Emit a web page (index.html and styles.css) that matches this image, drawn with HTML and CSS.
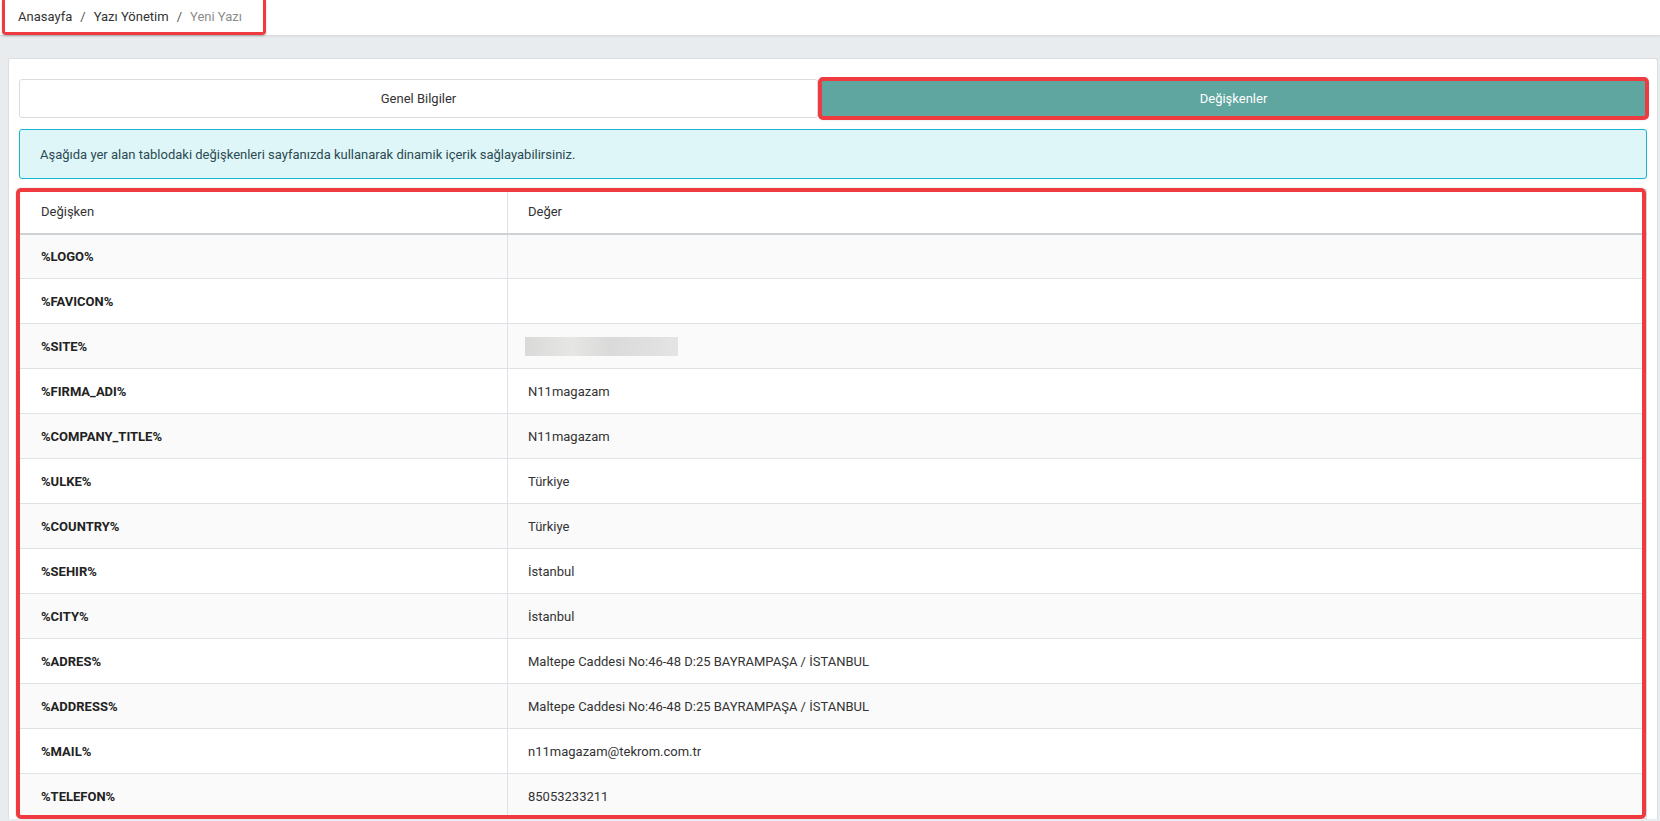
FILE: index.html
```html
<!DOCTYPE html>
<html lang="tr">
<head>
<meta charset="utf-8">
<title>Yeni Yazı</title>
<link rel="stylesheet" href="styles.css">
</head>
<body>
<header class="topbar">
  <nav class="breadcrumb">
    <a class="crumb" href="#">Anasayfa</a>
    <span class="sep">/</span>
    <a class="crumb" href="#">Yazı Yönetim</a>
    <span class="sep">/</span>
    <span class="crumb current">Yeni Yazı</span>
  </nav>
</header>
<main class="page">
  <section class="card">
    <div class="tabs">
      <button class="tab">Genel Bilgiler</button>
      <button class="tab active">Değişkenler</button>
    </div>
    <div class="alert">Aşağıda yer alan tablodaki değişkenleri sayfanızda kullanarak dinamik içerik sağlayabilirsiniz.</div>
    <div class="table-wrap">
      <table class="vars">
        <thead>
          <tr><th class="c1">Değişken</th><th>Değer</th></tr>
        </thead>
        <tbody>
          <tr><td class="c1">%LOGO%</td><td></td></tr>
          <tr><td class="c1">%FAVICON%</td><td></td></tr>
          <tr><td class="c1">%SITE%</td><td><span class="blur"></span></td></tr>
          <tr><td class="c1">%FIRMA_ADI%</td><td>N11magazam</td></tr>
          <tr><td class="c1">%COMPANY_TITLE%</td><td>N11magazam</td></tr>
          <tr><td class="c1">%ULKE%</td><td>Türkiye</td></tr>
          <tr><td class="c1">%COUNTRY%</td><td>Türkiye</td></tr>
          <tr><td class="c1">%SEHIR%</td><td>İstanbul</td></tr>
          <tr><td class="c1">%CITY%</td><td>İstanbul</td></tr>
          <tr><td class="c1">%ADRES%</td><td>Maltepe Caddesi No:46-48 D:25 BAYRAMPAŞA / İSTANBUL</td></tr>
          <tr><td class="c1">%ADDRESS%</td><td>Maltepe Caddesi No:46-48 D:25 BAYRAMPAŞA / İSTANBUL</td></tr>
          <tr><td class="c1">%MAIL%</td><td>n11magazam@tekrom.com.tr</td></tr>
          <tr><td class="c1">%TELEFON%</td><td>85053233211</td></tr>
        </tbody>
      </table>
    </div>
  </section>
</main>
</body>
</html>
```

FILE: styles.css
```css
* { box-sizing: border-box; }

html, body {
  margin: 0;
  padding: 0;
}

body {
  background: #e9ecef;
  font-family: Roboto, "Liberation Sans", Arial, sans-serif;
  font-size: 13px;
  color: #333;
}

.topbar {
  background: #fff;
  height: 36px;
  border-bottom: 1px solid #d9dcdf;
  box-shadow: 0 1px 2px rgba(0,0,0,0.05);
}

.breadcrumb {
  display: flex;
  align-items: center;
  width: 264px;
  height: 35px;
  margin-left: 2px;
  padding-left: 13px;
  border: 3px solid #ef3b3f;
  border-top: none;
  border-radius: 0 0 4px 4px;
  box-shadow: 0 1px 2px rgba(0,0,0,0.25);
}

.crumb {
  color: #333;
  text-decoration: none;
}

.crumb.current { color: #8c8c8c; }

.sep {
  color: #555;
  padding: 0 8px;
}

.page {
  padding: 22px 2px 0 8px;
}

.card {
  background: #fff;
  border: 1px solid #dcdfe2;
  border-bottom: none;
  border-radius: 3px 3px 0 0;
  padding: 20px 10px 0 10px;
}

.tabs {
  display: grid;
  grid-template-columns: 799px 1fr;
  column-gap: 2px;
  margin-bottom: 11px;
}

.tab {
  height: 39px;
  font-family: inherit;
  font-size: 13px;
  color: #333;
  background: #fff;
  border: 1px solid #dcdcdc;
  border-radius: 3px;
  cursor: pointer;
}

.tab.active {
  background: #5fa5a0;
  border-color: #5fa5a0;
  color: #fff;
  outline: 4px solid #ef3b3f;
  outline-offset: -2px;
  box-shadow: 0 1px 3px rgba(0,0,0,0.35);
}

.alert {
  height: 50px;
  display: flex;
  align-items: center;
  padding: 0 20px;
  background: #def6f8;
  border: 1px solid #17b6cf;
  border-radius: 3px;
  color: #2c4a52;
  margin-bottom: 10px;
}

.table-wrap {
  position: relative;
}

.table-wrap::after {
  content: "";
  position: absolute;
  left: -3px;
  right: 1px;
  top: -1px;
  bottom: 0;
  border: 4px solid #ef3b3f;
  border-radius: 5px;
  pointer-events: none;
  box-shadow: 0 0 2px rgba(0,0,0,0.2);
}

.vars {
  width: 100%;
  border-collapse: collapse;
  border: 1px solid #dee2e6;
}

.vars th,
.vars td {
  height: 45px;
  padding: 0 20px;
  text-align: left;
  vertical-align: middle;
  border-top: 1px solid #dee2e6;
  border-left: 1px solid #dee2e6;
}

.vars th {
  height: 44px;
  font-weight: 400;
  color: #333;
  border-bottom: 2px solid #cfd2d5;
}

.vars .c1 {
  width: 488px;
  padding-left: 21px;
}

.vars td.c1 {
  font-weight: 700;
  color: #222;
}

.vars tbody tr:nth-child(odd) {
  background: #fafafa;
}

.blur {
  display: block;
  width: 153px;
  height: 19px;
  margin-left: -3px;
  background: linear-gradient(90deg, #d9d9d9 0%, #e6e6e4 30%, #dadada 55%, #e4e4e4 100%);
}
```
